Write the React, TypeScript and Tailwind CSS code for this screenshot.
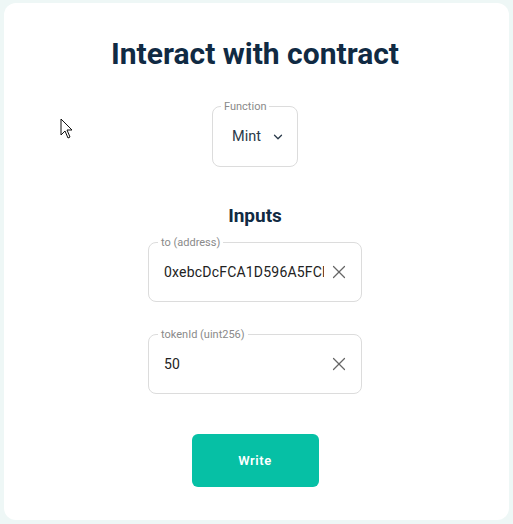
import { ChevronDown, X } from 'lucide-react'

function Field({ label, value }: { label: string; value: string }) {
	return (
		<div className="relative w-[214px] h-[60px] rounded-[8px] border border-[#dcdcdc] pl-[15px] pr-[11px] flex items-center">
			<span className="absolute -top-[7px] left-[9px] bg-white px-[3px] text-[11px] leading-[13px] text-[#8a8a8a]">
				{label}
			</span>
			<span className="w-[160px] overflow-hidden whitespace-nowrap text-[14px] text-[#222] tracking-[0.2px]">
				{value}
			</span>
			<X size={22} strokeWidth={1.3} className="text-[#666] ml-auto shrink-0" />
		</div>
	)
}

export default function App() {
	return (
		<div className="w-[513px] h-[524px] bg-[#eef7f6] pt-[3px] px-[4px]" style={{ fontFamily: 'Roboto, sans-serif' }}>
			<div className="relative h-[517px] bg-white rounded-[12px] flex flex-col items-center pr-[3px]">
				<svg className="absolute left-[56px] top-[115px]" width="14" height="22" viewBox="0 0 14 22">
					<path d="M1 1 L1 17 L5 13 L8 20 L10 19 L7 12 L12 12 Z" fill="white" stroke="#111" strokeWidth="1" />
				</svg>
				<h1 className="mt-[33px] text-[30px] font-bold text-[#102a43] leading-[36px]">Interact with contract</h1>
				<div className="relative mt-[34px] w-[86px] h-[61px] rounded-[8px] border border-[#dcdcdc] flex items-center pl-[19px]">
					<span className="absolute -top-[7px] left-[8px] bg-white px-[3px] text-[11px] leading-[13px] text-[#8a8a8a]">
						Function
					</span>
					<span className="text-[14.5px] text-[#2a3a4a]">Mint</span>
					<ChevronDown size={14} strokeWidth={2.2} className="text-[#2a3a4a] ml-[10px]" />
				</div>
				<h2 className="mt-[37px] text-[19px] font-bold text-[#102a43] leading-[24px]">Inputs</h2>
				<div className="mt-[14px]">
					<Field label="to (address)" value="0xebcDcFCA1D596A5FCB3a8b" />
				</div>
				<div className="mt-[32px]">
					<Field label="tokenId (uint256)" value="50" />
				</div>
				<button className="mt-[40px] w-[127px] h-[53px] rounded-[6px] bg-[#06c0a5] text-white text-[13px] font-semibold tracking-[0.6px]">
					Write
				</button>
			</div>
		</div>
	)
}
